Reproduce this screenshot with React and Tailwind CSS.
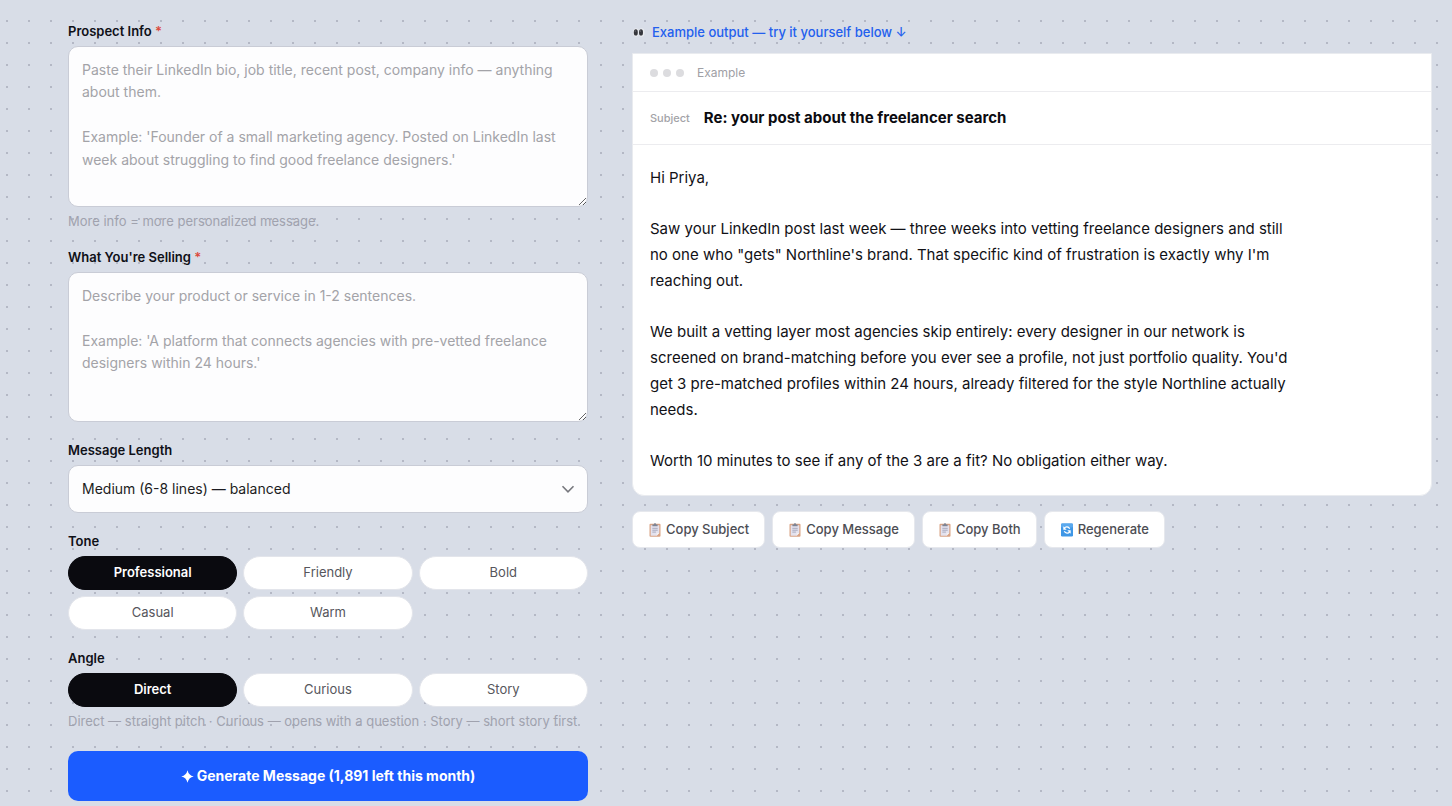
import React, { useState } from "react";

const TONES = ["Professional", "Friendly", "Bold", "Casual", "Warm"];
const ANGLES = ["Direct", "Curious", "Story"];

const PARAGRAPHS = [
  "Hi Priya,",
  "Saw your LinkedIn post last week — three weeks into vetting freelance designers and still no one who \"gets\" Northline's brand. That specific kind of frustration is exactly why I'm reaching out.",
  "We built a vetting layer most agencies skip entirely: every designer in our network is screened on brand-matching before you ever see a profile, not just portfolio quality. You'd get 3 pre-matched profiles within 24 hours, already filtered for the style Northline actually needs.",
  "Worth 10 minutes to see if any of the 3 are a fit? No obligation either way.",
];

function EyesIcon() {
  return (
    <svg width="13" height="13" viewBox="0 0 13 13" aria-hidden="true">
      <ellipse cx="4" cy="6.5" rx="2.9" ry="4.2" fill="#e9ebef" />
      <ellipse cx="9.6" cy="6.5" rx="2.9" ry="4.2" fill="#e9ebef" />
      <ellipse cx="3.8" cy="6.4" rx="2" ry="3.2" fill="#35363c" />
      <ellipse cx="9" cy="6.4" rx="2" ry="3.2" fill="#35363c" />
      <circle cx="3.2" cy="5" r="0.6" fill="#8c8e95" />
      <circle cx="8.4" cy="5" r="0.6" fill="#8c8e95" />
    </svg>
  );
}

function ClipboardIcon() {
  return (
    <svg width="14" height="14" viewBox="0 0 14 14" aria-hidden="true">
      <rect x="1.5" y="0.8" width="11" height="13" rx="1" fill="#d9a384" />
      <path d="M2.7 2.2h8.6v7.8l-2.6 2.8H2.7z" fill="#e4e2ee" />
      <path d="M11.3 10l-2.6 2.8V10z" fill="#f6f1f2" />
      <path d="M4.4 3.2V1.4h1.4a1.2 1.2 0 0 1 2.4 0h1.4v1.8z" fill="#7d8494" />
      <path d="M4.3 5.3h5.4M4.3 7.2h5.4M4.3 9.1h3.6" stroke="#9fa3b8" strokeWidth="0.9" />
    </svg>
  );
}

function RefreshIcon() {
  return (
    <svg width="14" height="14" viewBox="0 0 14 14" aria-hidden="true">
      <rect x="1" y="0.5" width="12" height="13" rx="1.2" fill="#3f97e6" />
      <rect x="1" y="0.5" width="12" height="4" rx="1.2" fill="#5aa9ee" />
      <path d="M4.3 5.2C5.5 3.5 8.5 3.4 9.7 5.8" fill="none" stroke="#fff" strokeWidth="1.3" />
      <path d="M9.7 8.8C8.5 10.5 5.5 10.6 4.3 8.2" fill="none" stroke="#fff" strokeWidth="1.3" />
      <path d="M3.3 3.2v3.5h3.4zM10.7 10.8V7.3H7.3z" fill="#fff" />
    </svg>
  );
}

function PillGroup({ label, options, value, onChange }) {
  return (
    <div role="group" aria-label={label} className="mt-[5px] grid grid-cols-3 gap-1.5">
      {options.map((option) => (
        <button
          key={option}
          type="button"
          aria-pressed={option === value}
          onClick={() => onChange(option)}
          className={
            option === value
              ? "h-[34px] rounded-full border border-[#0a0a0f] bg-[#0a0a0f] text-[13px] font-semibold text-white"
              : "h-[34px] rounded-full border border-[#e3e5eb] bg-white text-[13px] text-[#56565c]"
          }
        >
          {option}
        </button>
      ))}
    </div>
  );
}

const labelClass = "block text-[13px] leading-5 font-semibold text-[#0f1017]";
const fieldClass =
  "block w-full rounded-[10px] border border-[#c9ccd6] bg-[#fdfdfe] px-[13px] text-sm text-[#1c1c22] placeholder:text-[#a3a3a8]";
const hintClass = "mt-1 text-[13px] leading-5 text-[#a0a2ae]";
const actionClass =
  "flex h-[37px] items-center gap-1 rounded-lg border border-[#e6e8ed] bg-white px-[15px] text-[13px] font-medium text-[#4c4d53]";

export default function App() {
  const [tone, setTone] = useState("Professional");
  const [angle, setAngle] = useState("Direct");

  return (
    <main className="min-h-screen bg-[#d8dde7] bg-[radial-gradient(circle,#b4b8c5_1px,transparent_1px)] bg-[size:22px_22px] bg-[position:-4px_10px] pt-[21px] pr-5 pb-[5px] pl-[68px] font-['Inter','Liberation_Sans',sans-serif]">
      <div className="grid grid-cols-[520px_minmax(0,1fr)] items-start gap-11">
        <form onSubmit={(e) => e.preventDefault()}>
          <label htmlFor="prospect" className={labelClass}>
            Prospect Info <span className="text-[#dc4a3d]">*</span>
          </label>
          <textarea
            id="prospect"
            className={`${fieldClass} mt-[5px] h-[161px] resize-y py-3 leading-[1.6]`}
            placeholder={
              "Paste their LinkedIn bio, job title, recent post, company info — anything about them.\n\nExample: 'Founder of a small marketing agency. Posted on LinkedIn last week about struggling to find good freelance designers.'"
            }
          />
          <p className={hintClass}>More info = more personalized message.</p>

          <label htmlFor="selling" className={`${labelClass} mt-4`}>
            What You're Selling <span className="text-[#dc4a3d]">*</span>
          </label>
          <textarea
            id="selling"
            className={`${fieldClass} mt-[5px] h-[150px] resize-y py-3 leading-[1.6]`}
            placeholder={
              "Describe your product or service in 1-2 sentences.\n\nExample: 'A platform that connects agencies with pre-vetted freelance designers within 24 hours.'"
            }
          />

          <label htmlFor="length" className={`${labelClass} mt-[18px]`}>
            Message Length
          </label>
          <div className="mt-[5px] grid items-center">
            <select id="length" className={`${fieldClass} col-start-1 row-start-1 h-12 appearance-none`}>
              <option>Medium (6-8 lines) — balanced</option>
            </select>
            <svg
              className="pointer-events-none col-start-1 row-start-1 mr-[13px] justify-self-end"
              width="14"
              height="14"
              viewBox="0 0 14 14"
              fill="none"
              stroke="#77787e"
              strokeWidth="1.6"
              aria-hidden="true"
            >
              <path d="M1.5 4.2L7 9.8l5.5-5.6" />
            </svg>
          </div>

          <div className={`${labelClass} mt-[18px]`}>Tone</div>
          <PillGroup label="Tone" options={TONES} value={tone} onChange={setTone} />

          <div className={`${labelClass} mt-[18px]`}>Angle</div>
          <PillGroup label="Angle" options={ANGLES} value={angle} onChange={setAngle} />
          <p className={hintClass}>
            Direct — straight pitch · Curious — opens with a question · Story — short story first
          </p>

          <button
            type="submit"
            className="mt-5 flex h-[50px] w-full items-center justify-center gap-[3px] rounded-[10px] bg-[#1b5cff] text-sm font-bold text-white"
          >
            <svg width="13" height="13" viewBox="0 0 13 13" fill="currentColor" aria-hidden="true">
              <path d="M6.5 0.3Q7.6 5.4 12.7 6.5Q7.6 7.6 6.5 12.7Q5.4 7.6 0.3 6.5Q5.4 5.4 6.5 0.3z" />
            </svg>
            Generate Message (1,891 left this month)
          </button>
        </form>

        <section className="pt-px">
          <p className="flex items-center gap-[7px] text-[13px] leading-5 font-medium text-[#2360ee]">
            <EyesIcon />
            <span>Example output — try it yourself below ↓</span>
          </p>

          <article className="mt-[11px] rounded-b-xl border border-[#e9ebef] bg-white">
            <header className="flex h-[38px] items-center border-b border-[#ececef] px-[17px]">
              <div className="flex gap-[5px]">
                <span className="size-2 rounded-full bg-[#dcdcdf]" />
                <span className="size-2 rounded-full bg-[#dcdcdf]" />
                <span className="size-2 rounded-full bg-[#dcdcdf]" />
              </div>
              <span className="ml-[13px] text-xs text-[#a0a0a5]">Example</span>
            </header>
            <div className="flex h-[53px] items-center gap-[14px] border-b border-[#ececef] px-[17px]">
              <span className="text-[11px] font-medium text-[#a3a3a8]">Subject</span>
              <h2 className="text-[15px] font-bold text-[#0b0b10]">Re: your post about the freelancer search</h2>
            </div>
            <div className="px-[17px] pt-5 pb-[21px]">
              <div className="flex max-w-[645px] flex-col gap-[25px] text-[15px] leading-[26px] text-[#111116]">
                {PARAGRAPHS.map((text) => (
                  <p key={text}>{text}</p>
                ))}
              </div>
            </div>
          </article>

          <div className="mt-[15px] flex flex-wrap gap-[7px]">
            <button type="button" className={actionClass}>
              <ClipboardIcon />
              Copy Subject
            </button>
            <button type="button" className={actionClass}>
              <ClipboardIcon />
              Copy Message
            </button>
            <button type="button" className={actionClass}>
              <ClipboardIcon />
              Copy Both
            </button>
            <button type="button" className={actionClass}>
              <RefreshIcon />
              Regenerate
            </button>
          </div>
        </section>
      </div>
    </main>
  );
}
